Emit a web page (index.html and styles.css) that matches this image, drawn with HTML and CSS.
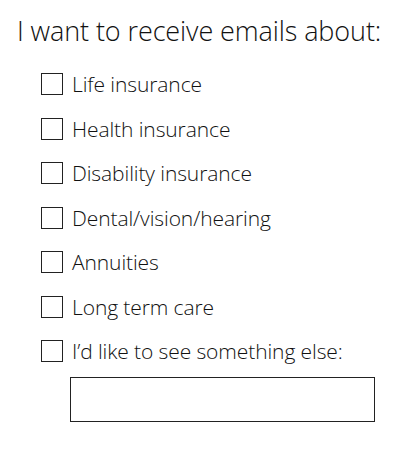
FILE: index.html
```html
<!DOCTYPE html>
<html>
<head>
<meta charset="utf-8">
<link rel="stylesheet" href="styles.css">
</head>
<body>
<form class="prefs">
  <h1 class="title">I want to receive emails about:</h1>
  <ul class="options">
    <li class="option"><span class="box"></span><span class="label">Life insurance</span></li>
    <li class="option"><span class="box"></span><span class="label">Health insurance</span></li>
    <li class="option"><span class="box"></span><span class="label">Disability insurance</span></li>
    <li class="option"><span class="box"></span><span class="label">Dental/vision/hearing</span></li>
    <li class="option"><span class="box"></span><span class="label">Annuities</span></li>
    <li class="option"><span class="box"></span><span class="label">Long term care</span></li>
    <li class="option"><span class="box"></span><span class="label">I’d like to see something else:</span></li>
  </ul>
  <div class="other"><input class="other-input" type="text"></div>
</form>
</body>
</html>
```
FILE: styles.css
```css
html, body {
  margin: 0;
  padding: 0;
  background: #fff;
}
body {
  font-family: "Open Sans", "DejaVu Sans", sans-serif;
  color: #111;
  width: 400px;
  height: 452px;
  overflow: hidden;
}
.prefs {
  padding: 13px 0 0 0;
}
.title {
  margin: 0 0 0 17px;
  font-size: 27px;
  font-weight: 300;
  letter-spacing: -0.1px;
  line-height: 36px;
  white-space: nowrap;
}
.options {
  list-style: none;
  margin: 24px 0 0 0;
  padding: 0 0 0 41px;
  display: flex;
  flex-direction: column;
  gap: 22.5px;
}
.option {
  display: flex;
  align-items: center;
  height: 22px;
  gap: 9px;
}
.box {
  width: 20px;
  height: 20px;
  border: 1px solid #222;
  flex: none;
}
.label {
  font-size: 21px;
  font-weight: 300;
  letter-spacing: -0.1px;
  line-height: 22px;
  white-space: nowrap;
}
.other {
  padding: 15px 0 0 70px;
}
.other-input {
  display: block;
  box-sizing: border-box;
  width: 305px;
  height: 45px;
  border: 1px solid #222;
  margin: 0;
  padding: 0;
  background: #fff;
}
```
